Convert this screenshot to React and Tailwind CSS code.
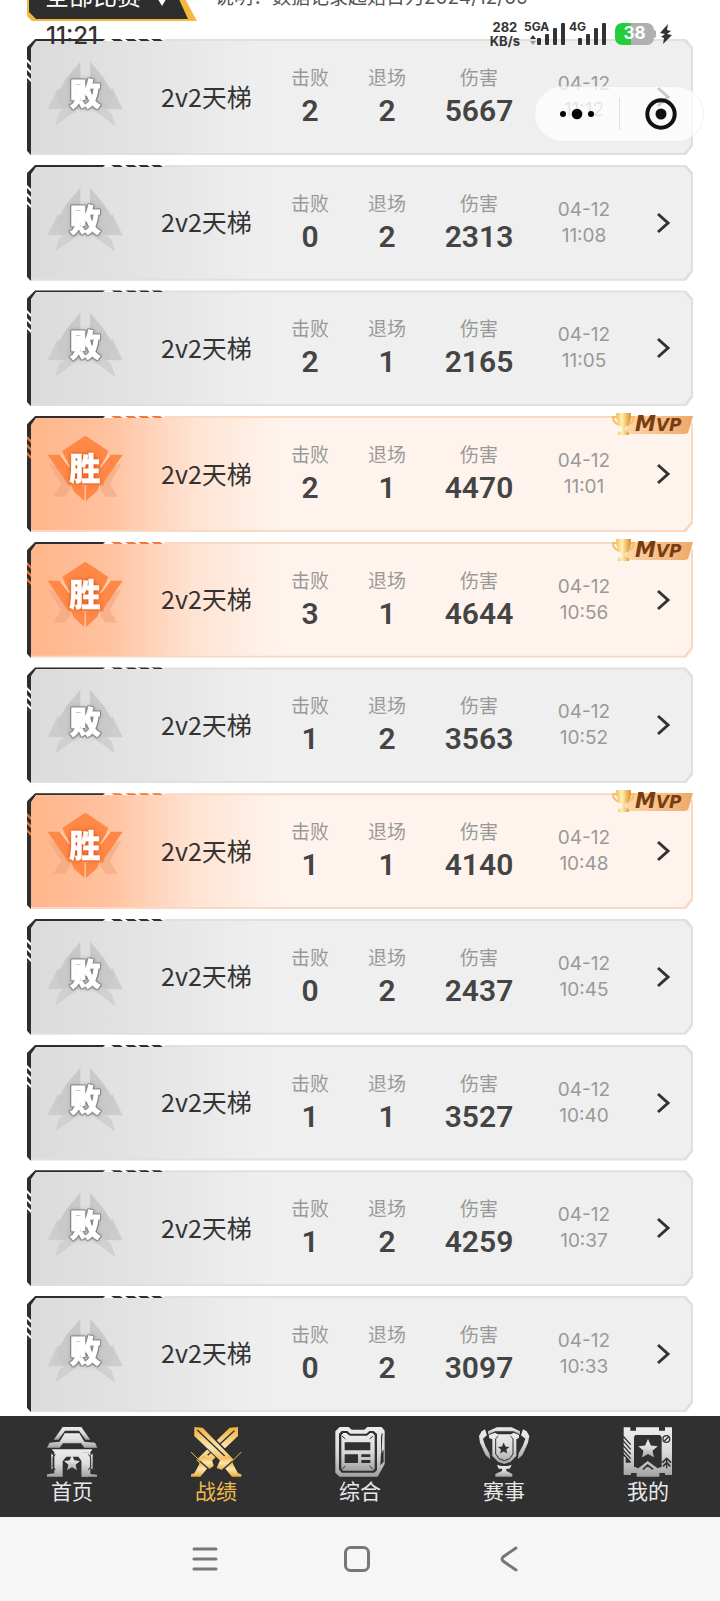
import React from 'react';

const MATCHES = [
  { win: false, kills: 2, exits: 2, damage: 5667, date: '04-12', time: '11:12' },
  { win: false, kills: 0, exits: 2, damage: 2313, date: '04-12', time: '11:08' },
  { win: false, kills: 2, exits: 1, damage: 2165, date: '04-12', time: '11:05' },
  { win: true, kills: 2, exits: 1, damage: 4470, date: '04-12', time: '11:01' },
  { win: true, kills: 3, exits: 1, damage: 4644, date: '04-12', time: '10:56' },
  { win: false, kills: 1, exits: 2, damage: 3563, date: '04-12', time: '10:52' },
  { win: true, kills: 1, exits: 1, damage: 4140, date: '04-12', time: '10:48' },
  { win: false, kills: 0, exits: 2, damage: 2437, date: '04-12', time: '10:45' },
  { win: false, kills: 1, exits: 1, damage: 3527, date: '04-12', time: '10:40' },
  { win: false, kills: 1, exits: 2, damage: 4259, date: '04-12', time: '10:37' },
  { win: false, kills: 0, exits: 2, damage: 3097, date: '04-12', time: '10:33' },
];

function LoseBadge() {
  const wing = (
    <g>
      <path d="M112 178L82 241H140L160 200Z" fill="#cdcdcd" />
      <path d="M180 98V240H124L108 198L138 148Z" fill="#c9c9c9" />
      <path d="M116 252L152 226L174 240L104 290Z" fill="#d0d0d0" />
    </g>
  );
  return (
    <svg viewBox="80 90 228 204" className="h-[68px] w-[76px]">
      {wing}
      <g transform="translate(389 0) scale(-1 1)">{wing}</g>
      <text x="195" y="228" textAnchor="middle" fontSize="93" fill="#fff" stroke="#fff" strokeWidth="3"
        className="font-['Noto_Sans_CJK_SC',sans-serif] font-black [filter:drop-shadow(2px_0_0_#888)_drop-shadow(-2px_0_0_#888)_drop-shadow(0_2px_0_#888)_drop-shadow(0_-2px_0_#888)_drop-shadow(0_0_6px_#9997)]">败</text>
    </svg>
  );
}

function WinBadge() {
  return (
    <svg viewBox="80 96 228 204" className="h-[68px] w-[76px]">
      <g fill="#eea27c" opacity="0.5">
        <path d="M84 178L104 186L150 240V256L134 278H98L122 240Z" />
        <path d="M304 178L284 186L240 240V256L256 278H292L268 240Z" />
      </g>
      <g fill="#ff8846">
        <path d="M195 95L264 141L252 168H138L126 141Z" />
        <path d="M82 152H118L146 186V246Z" />
        <path d="M307 152H271L243 186V246Z" />
        <path d="M150 238L192 246V291L160 262ZM240 238L197 246V291L230 262Z" />
        <path d="M140 160H250V244H146Z" />
      </g>
      <path d="M122 154L148 188M267 154L241 188" stroke="#ffd0b2" strokeWidth="5" />
      <text x="194" y="228" textAnchor="middle" fontSize="94" fill="#fff" stroke="#fff" strokeWidth="1"
        className="font-['Noto_Sans_CJK_SC',sans-serif] font-black [filter:drop-shadow(0_0_6px_#d9480f)]">胜</text>
    </svg>
  );
}

function CardEdge({ win }) {
  const accent = win ? '#f0793a' : '#2e2e2e';
  return (
    <svg width="140" height="116" viewBox="0 0 140 116" className="absolute left-0 top-0" aria-hidden="true">
      <path d="M0 8L8 0H78L76 2H9L4 9V116L0 112Z" fill="#2e2e2e" />
      <path d="M78 0H138L136 2H78Z" fill="#fff" />
      <path d="M84 0H93L96 2H87ZM98 0H107L110 2H101ZM111 0H120L123 2H114ZM124 0H133L136 2H127Z" fill={accent} />
      <path d="M0 20L4 24V46L0 42Z" fill={win ? accent : '#fff'} />
      <path d="M0 23L4 27V32L0 28ZM0 31L4 35V40L0 36ZM0 39L4 43V47L0 42Z" fill="#2e2e2e" />
    </svg>
  );
}

function MvpTag() {
  return (
    <svg viewBox="0 0 82 24" className="absolute -top-1 right-0 h-6 w-[82px]" role="img" aria-label="MVP">
      <defs>
        <linearGradient id="ribbon" x1="0" x2="1">
          <stop offset="0" stopColor="#fbd9ae" />
          <stop offset="1" stopColor="#efa868" />
        </linearGradient>
        <linearGradient id="cup" x1="0" x2="1">
          <stop offset="0" stopColor="#f6bd5e" />
          <stop offset="0.4" stopColor="#fff0b0" />
          <stop offset="1" stopColor="#dd8a25" />
        </linearGradient>
      </defs>
      <path d="M19 4H82L77 21L74 22H13Z" fill="url(#ribbon)" />
      <path d="M6 5H2Q2 12 10 13M19 5H23Q22 12 15 13" fill="none" stroke="#f3bf6a" strokeWidth="2" />
      <path d="M5 1H20Q20 14 14 15V19L18 20V23H7V20L11 19V15Q5 13 5 1Z" fill="url(#cup)" />
      <text x="24" y="19" fill="#7a3d10" className="font-['DejaVu_Sans',sans-serif] font-bold italic">
        <tspan fontSize="21">M</tspan>
        <tspan fontSize="17">VP</tspan>
      </text>
    </svg>
  );
}

function Stat({ label, value, className }) {
  return (
    <div className={`flex flex-col items-center ${className}`}>
      <dt className="text-[19px] leading-7 text-[#999]">{label}</dt>
      <dd className="text-[30px] font-semibold leading-9 text-[#444]">{value}</dd>
    </div>
  );
}

const CUT = '[clip-path:polygon(8px_0,calc(100%-7px)_0,100%_8px,100%_calc(100%-9px),calc(100%-7px)_100%,3px_100%,0_calc(100%-4px),0_8px)]';

function MatchRow({ match }) {
  const frame = match.win ? 'bg-[#fad9c4]' : 'bg-[#e0e0e0]';
  const fill = match.win
    ? 'bg-[linear-gradient(90deg,#ffb58a_0,#ffc29f_12%,#ffe3d3_25%,#fff4ed_38%)]'
    : 'bg-[linear-gradient(90deg,#dbdbdb_0,#e2e2e2_14%,#efefef_36%)]';
  return (
    <li className="relative">
      <a href="#detail" className="block">
        <div className={`relative p-[2px] ${frame} ${CUT}`}>
          <div className={`flex h-28 items-center ${fill} ${CUT}`}>
            <div className="ml-[18px] w-[114px] shrink-0 pb-2">{match.win ? <WinBadge /> : <LoseBadge />}</div>
            <div className="w-[111px] shrink-0 whitespace-nowrap pb-[3px] font-['Noto_Sans_CJK_SC',sans-serif] text-[25px] leading-8 text-[#333]">2v2天梯</div>
            <dl className="flex grow">
              <Stat label="击败" value={match.kills} className="w-[76px]" />
              <Stat label="退场" value={match.exits} className="w-[78px]" />
              <Stat label="伤害" value={match.damage} className="w-[106px]" />
            </dl>
            <div className="w-[78px] shrink-0 text-center font-['Inter',sans-serif] text-[19px] leading-[26px] text-[#999]">
              <div>{match.date}</div>
              <div>{match.time}</div>
            </div>
            <svg viewBox="0 0 14 24" className="ml-[34px] mr-5 h-6 w-[14px] shrink-0" fill="none" stroke="#333" strokeWidth="3">
              <path d="M1 3L11 12L1 21" />
            </svg>
          </div>
          <CardEdge win={match.win} />
        </div>
        {match.win && <MvpTag />}
      </a>
    </li>
  );
}

const STAR = 'M0-24L7-8L24-6L11 5L15 22L0 13L-15 22L-11 5L-24-6L-7-8Z';

function HomeIcon() {
  return (
    <svg viewBox="137 78 156 156" className="size-[52px]" fill="url(#silver)">
      <path d="M160 119L187 81H243L270 119H256L236 92H194L174 119Z" />
      <path d="M193 100H237L252 125L284 128L291 143H252L242 130H188L178 143H140L148 128L178 125Z" />
      <path d="M154 148H276L270 157H246V222H263V230H244V184L234 170H198L187 184V230H140V223L162 220V157Z" />
      <path d="M244 157H270V222L290 224V230H244Z" />
      <path d="M153 160L158 166V204L153 210ZM277 160L272 166V204L277 210Z" />
      <path d="M165 163L158 172V200L165 210M264 163L271 172V200L264 210" fill="none" stroke="#303030" strokeWidth="3" />
      <path d={STAR} transform="translate(215 189)" />
    </svg>
  );
}

function BattleIcon() {
  return (
    <svg viewBox="569 78 156 156" className="size-[52px]">
      <path d="M713 81V108L612 204L588 180L688 83Z" fill="url(#gold)" />
      <path d="M702 92L622 166" stroke="#303030" strokeWidth="4" />
      <path d="M606 168L634 176L640 198L626 208L600 184Z" fill="url(#gold)" />
      <path d="M600 184L622 204L600 230H572V223L582 220L594 198Z" fill="url(#gold)" />
      <path d="M586 172L632 214" stroke="#303030" strokeWidth="4" />
      <path d="M572 156L600 184" stroke="#e9b94f" strokeWidth="3" />
      <g transform="translate(1295 0) scale(-1 1)">
        <path d="M717 79V108L612 208L584 182L688 79Z" fill="#303030" />
        <path d="M713 81V108L616 200L594 180L688 83Z" fill="url(#gold)" />
        <path d="M704 90L622 168" stroke="#303030" strokeWidth="4" />
        <path d="M606 168L634 176L646 204L630 210L600 184Z" fill="url(#gold)" />
        <path d="M600 184L622 204L600 230H572V223L582 220L594 198Z" fill="url(#gold)" />
        <path d="M586 172L632 214" stroke="#303030" strokeWidth="4" />
        <path d="M572 156L600 184" stroke="#e9b94f" strokeWidth="3" />
      </g>
    </svg>
  );
}

function SummaryIcon() {
  return (
    <svg viewBox="281 78 156 156" className="size-[52px]">
      <path d="M298 81H325L334 89H372L381 81H424L433 92V192L412 230H298L285 218V94Z" fill="url(#silver)" />
      <path d="M304 93H321L330 101H378L387 93H400L410 102V210L402 218H304L296 208V102Z" fill="#303030" />
      <path d="M309 99H318L328 107H380L390 99H396L403 106V206L398 212H308L303 206V106Z" fill="url(#silver)" />
      <path d="M424 100L432 104V152L422 156V112ZM422 158L430 154V186L420 196Z" fill="#303030" />
      <path d="M426 104L432 100V150L424 153Z" fill="#dedede" />
      <path d="M313 127H390V151H313ZM313 163H353V189H313ZM363 163H390V171H363ZM363 180H390V189H363Z" fill="#303030" />
      <path d="M305 108L315 117M398 108L388 117M305 208L315 198M398 208L388 198" stroke="#303030" strokeWidth="3" />
    </svg>
  );
}

function TrophyIcon() {
  return (
    <svg viewBox="83 78 156 156" className="size-[52px]" fill="url(#silver)">
      <path d="M113 94L140 82H184L209 94V104L190 94H134L113 104Z" />
      <path d="M116 105L134 98L142 103H182L190 98L206 105V114L198 118V168L180 186L162 192L144 186L126 168V118L116 114Z" />
      <path d="M104 88L94 94L86 108L89 128L106 166L120 178L117 160L104 136L98 116L110 106ZM218 88L229 94L237 108L233 128L216 166L202 178L205 160L218 136L225 116L212 106Z" />
      <path d="M144 108L136 116V162L146 176L162 182L178 176L188 162V116L180 108" fill="none" stroke="#303030" strokeWidth="3" />
      <path d={STAR} transform="translate(160 145) scale(0.72)" fill="#303030" />
      <path d="M140 194L152 198H172L184 194L178 206H168V213L186 222V230H135V222L155 213V206H145Z" />
    </svg>
  );
}

function MineIcon() {
  return (
    <svg viewBox="517 78 156 156" className="size-[52px]">
      <path d="M522 82H542V92H559V82H628V92H646V82H667V225H646V219H629V230H561V219H544V225H522Z" fill="url(#silver)" />
      <path d="M557 105H631L636 111V200L624 205L594 183L566 205L553 200V111Z" fill="#303030" />
      <path d="M520 108L543 134M520 122L543 148M520 136L543 162M520 150L543 176" stroke="#303030" strokeWidth="4" />
      <path d="M520 158L543 184V188H528V172L520 168Z" fill="#303030" />
      <path d={STAR} transform="translate(595 146) scale(1.22)" fill="url(#silver)" />
      <path d="M580 208L594 195L610 208M638 188L651 175L664 188M640 199L651 188L662 199" fill="none" stroke="#303030" strokeWidth="5" />
      <path d="M651 176V205" stroke="#303030" strokeWidth="4" />
      <circle cx="650" cy="117" r="10" fill="none" stroke="#303030" strokeWidth="4" />
      <path d="M644 123L656 111" stroke="#303030" strokeWidth="4" />
    </svg>
  );
}

const TABS = [
  { name: '首页', Icon: HomeIcon },
  { name: '战绩', Icon: BattleIcon, active: true },
  { name: '综合', Icon: SummaryIcon },
  { name: '赛事', Icon: TrophyIcon },
  { name: '我的', Icon: MineIcon },
];

function Signal({ label }) {
  return (
    <div className="grid">
      <span className="col-start-1 row-start-1 text-[12px] font-bold leading-[8px]">{label}</span>
      <svg viewBox="0 0 28 22" className="col-start-1 row-start-1 h-[22px] w-7 justify-self-end" fill="#333">
        <rect x="0" y="15" width="4" height="7" rx="1" />
        <rect x="8" y="11" width="4" height="11" rx="1" />
        <rect x="16" y="5" width="4" height="17" rx="1" />
        <rect x="24" y="0" width="4" height="22" rx="1" />
      </svg>
    </div>
  );
}

function StatusBar() {
  return (
    <div className="absolute inset-x-0 top-[22px] flex h-6 items-center justify-between pl-[46px] pr-12 font-['Inter','Roboto',sans-serif] text-[#333]">
      <span className="pt-1 text-[24px] font-medium leading-6">11:21</span>
      <div className="flex items-center">
        <div className="mr-1 text-center text-[13px] font-bold leading-[14px]">
          <div>282</div>
          <div>KB/s</div>
        </div>
        <div className="relative mr-1 w-[41px]">
          <Signal label="5GA" />
          <svg viewBox="0 0 6 10" className="absolute bottom-0 left-[6px] h-[10px] w-[6px]">
            <path d="M0 4L3 0L6 4Z" fill="#333" />
            <path d="M0 6L3 10L6 6Z" fill="#999" />
          </svg>
        </div>
        <div className="mr-[9px] w-[37px]"><Signal label="4G" /></div>
        <div className="flex h-[22px] w-[39px] items-center justify-center rounded-[7px] bg-[linear-gradient(90deg,#25cc3c_40%,#b0b0b0_40%)] text-[17px] font-bold text-white">38</div>
        <div className="h-2 w-[2px] rounded-r bg-[#b0b0b0]" />
        <svg viewBox="0 0 12 20" className="ml-1 h-5 w-3" fill="#333">
          <path d="M8 0L0 9L5 10L1 13L4 14L3 20L12 11L7 10L11 7L7 6Z" />
        </svg>
      </div>
    </div>
  );
}

function Capsule() {
  return (
    <div className="absolute right-4 top-[86px] flex h-[56px] w-[170px] items-center rounded-full border border-black/5 bg-white/75">
      <button aria-label="更多" className="flex h-full flex-1 items-center justify-center">
        <svg viewBox="0 0 36 12" className="h-3 w-9">
          <circle cx="4" cy="6" r="3" />
          <circle cx="18" cy="6" r="5.3" />
          <circle cx="32" cy="6" r="3" />
        </svg>
      </button>
      <span className="h-8 w-px bg-black/10" />
      <button aria-label="关闭" className="flex h-full flex-1 items-center justify-center">
        <svg viewBox="0 0 32 32" className="size-8">
          <circle cx="16" cy="16" r="13.7" fill="none" stroke="#111" strokeWidth="4" />
          <circle cx="16" cy="16" r="5.5" fill="#111" />
        </svg>
      </button>
    </div>
  );
}

export default function App() {
  return (
    <div className="relative flex min-h-screen flex-col overflow-hidden bg-white font-['Roboto','Noto_Sans_CJK_SC',sans-serif]">
      <svg width="0" height="0" className="absolute" aria-hidden="true">
        <linearGradient id="silver" x1="0" y1="0" x2="0" y2="1">
          <stop offset="0" stopColor="#ededed" />
          <stop offset="0.5" stopColor="#dadada" />
          <stop offset="1" stopColor="#a2a2a2" />
        </linearGradient>
        <linearGradient id="gold" x1="0" y1="0" x2="0" y2="1">
          <stop offset="0" stopColor="#f2ae3a" />
          <stop offset="0.5" stopColor="#fbe6b0" />
          <stop offset="1" stopColor="#e9ad38" />
        </linearGradient>
      </svg>

      <header className="flex h-[21px] items-end overflow-hidden pl-[27px]">
        <div className="flex h-11 w-[170px] shrink-0 bg-[#f5b83d] pb-[2px] pl-[2px] [clip-path:polygon(0_0,86%_0,100%_100%,5px_100%,0_calc(100%-5px))]">
          <div className="relative w-[159px] bg-[#2e2e2e] [clip-path:polygon(0_0,88%_0,100%_100%,7px_100%,0_calc(100%-7px))]">
            <select aria-label="比赛类型" className="h-10 w-full appearance-none bg-transparent pl-4 text-[24px] text-white">
              <option>全部比赛</option>
            </select>
            <svg viewBox="0 0 12 10" className="absolute right-[20px] top-[19px] h-[10px] w-3" fill="#fff"><path d="M0 0H12L6 10Z" /></svg>
          </div>
        </div>
        <p className="ml-[18px] h-11 shrink-0 font-['Inter','Noto_Sans_CJK_SC',sans-serif] text-[19px] leading-[42px] text-[#555]">说明：数据记录起始日为2024/12/09</p>
      </header>

      <ul className="flex grow flex-col justify-between gap-2 pb-1 pl-[27px] pr-[27px] pt-[18px]">
        {MATCHES.map((match) => <MatchRow key={match.time} match={match} />)}
      </ul>

      <nav className="flex h-[101px] bg-[#303030]">
        {TABS.map(({ name, Icon, active }) => (
          <a key={name} href="#tab" className={`flex flex-1 flex-col items-center pt-[10px] text-[21px] leading-[28px] ${active ? 'text-[#efbb4c]' : 'text-[#e8e8e8]'}`}>
            <Icon />
            {name}
          </a>
        ))}
      </nav>

      <div className="flex h-[84px] items-center justify-center gap-[126px] bg-[#f6f6f6] pr-[6px] text-[#777]">
        <button aria-label="最近任务">
          <svg viewBox="0 0 26 26" className="size-[26px]" stroke="currentColor" strokeWidth="3" strokeLinecap="round"><path d="M2 3H24M2 13H24M2 23H24" /></svg>
        </button>
        <button aria-label="主屏幕">
          <svg viewBox="0 0 26 26" className="size-[26px]" fill="none" stroke="currentColor" strokeWidth="3"><rect x="1.5" y="1.5" width="23" height="23" rx="5" /></svg>
        </button>
        <button aria-label="返回">
          <svg viewBox="0 0 26 26" className="size-[26px]" fill="none" stroke="currentColor" strokeWidth="3" strokeLinecap="round"><path d="M20 2L7 11Q5 13 7 15L20 24" /></svg>
        </button>
      </div>

      <StatusBar />
      <Capsule />
    </div>
  );
}
